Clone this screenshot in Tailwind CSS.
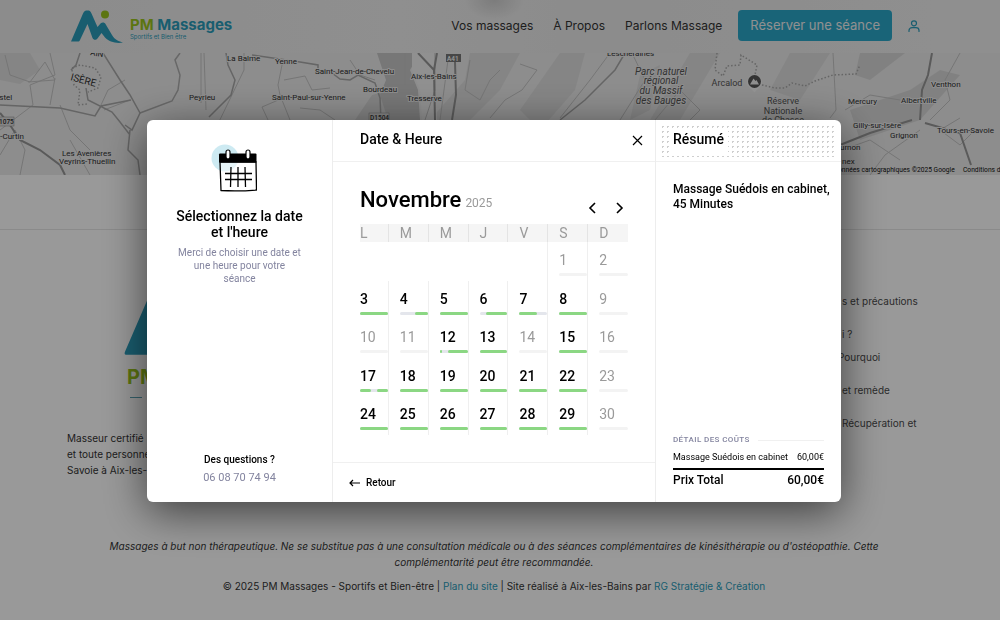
<!DOCTYPE html>
<html lang="fr">
<head>
<meta charset="utf-8">
<meta name="viewport" content="width=device-width, initial-scale=1">
<title>PM Massages - Réserver une séance</title>
<script src="https://cdn.jsdelivr.net/npm/@tailwindcss/browser@4"></script>
</head>
<body class="h-screen overflow-hidden bg-white font-['Inter',sans-serif] text-[#333]">
<div class="relative">
  <header class="flex h-[53px] items-center bg-[#eeeeee] bg-[radial-gradient(ellipse_30px_20px_at_494px_0px,#cfcfcf,transparent),linear-gradient(90deg,#e9e9e9,#eeeeee_40%,#e9e9e9_60%,#efefef)] pr-20 pb-0.5 pl-[70px]">
    <a href="#" class="flex items-center gap-1.5 pt-0.5" aria-label="PM Massages">
      <svg class="h-[34px] w-[54px]" viewBox="0 0 54 34" fill="none">
        <path d="M1 31.5 13 3.5C14 1 15.5.5 17.500.5S20.500 1 21.500 3.500L27.500 17 30.500 13.500C32 12 34.500 12 35.500 14L42 25C45 30 49 31.500 53 32.500 46 34 39 31.500 35 27.500L31.500 23 27.500 28.500C26 30.500 23.500 30 22.500 28L17.500 14 10 30C9.500 31.200 9 31.500 8 31.500Z" fill="#2b9cba"/>
        <circle cx="35" cy="4.500" r="4" fill="#9ac31c"/>
      </svg>
      <span class="block pt-1">
        <span class="block text-[15px] leading-[17px] font-bold text-[#2b9cba]"><span class="text-[#9ac31c]">PM</span> Massages</span>
        <span class="block text-[6px] leading-[8px] text-[#2b9cba]">Sportifs et Bien être</span>
      </span>
    </a>
    <nav class="ml-auto flex items-center gap-5 text-xs whitespace-nowrap">
      <a href="#">Vos massages</a>
      <a href="#">À Propos</a>
      <a href="#">Parlons Massage</a>
      <button type="button" class="-ml-1 h-[31px] rounded bg-[#2ba7c9] px-3 text-[13px] text-[#f0f0f0]">Réserver une séance</button>
      <a href="#" aria-label="Mon compte" class="-ml-1">
        <svg class="size-3" viewBox="0 0 12 12" fill="none" stroke="#2b9cba" stroke-width="1.200" stroke-linecap="round"><circle cx="6" cy="3.300" r="2.500"/><path d="M1 11.500V10.500C1 8.700 2.500 7.700 4 7.700H8C9.500 7.700 11 8.700 11 10.500V11.500"/></svg>
      </a>
    </nav>
  </header>

  <svg class="block h-[122px] w-full bg-[#ebebeb] font-['Roboto',sans-serif]" viewBox="0 53 1000 122" preserveAspectRatio="xMidYMid slice">
    <g fill="#dedede">
      <path d="M470 53H520L500 90 470 120H430L465 80ZM560 53 585 53 575 90 540 130 520 110ZM690 53H720L680 120H650ZM790 53 830 53 800 100 770 90ZM0 53H30L40 70 20 84 0 80ZM640 75 660 65 650 110 630 120Z"/>
      <path d="M860 53H905L870 80 855 75ZM355 120 372 95 390 90 385 120ZM850 110 910 90 940 70 960 75 920 120 860 140Z" fill="#d8d8d8"/>
    </g>
    <path d="M377 53H420L410 70 418 90 420 120H388L380 95 386 80Z" fill="#c6c6c6"/>
    <path d="M412 53 434 53 437 120H422L420 90 412 70Z" fill="#f0f0f0"/>
    <g fill="none" stroke="#c4c4c4" stroke-width="1">
      <path d="M5 55 10 75 30 82 45 62 55 80 28 82M50 53 55 75 30 85 33 105 0 130M55 78 50 105M125 80 108 90 101 105M130 100 104 110M201 53V103M204 53 206 110M244 53V70L215 130M282 65 278 85 280 95 290 120M284 80 305 76 312 90 330 88M290 95 262 107 268 120M0 155 15 130 25 150 20 175M60 105 70 130 90 150M350 60 360 75 375 80M470 60 465 90 480 100 490 80 500 70M520 64 537 70 522 90 505 100 490 118M610 53 590 80 560 118M632 53 645 80 620 120M655 120 680 90 700 110 690 120M833 53 836 110 830 118M960 53 945 80 950 100 930 120M845 110 870 95 900 100M842 150 870 140 900 160M960 118 940 130 960 145 975 130M870 175 885 155 920 130M405 53V85M300 108 320 110 335 120M435 53V90L425 120M448 60 440 120M70 140 90 175"/>
      <path d="M180 53 175 60 180 75 178 90 172 101 140 113" stroke="#adadad" stroke-width="1.500"/>
    </g>
    <g fill="none" stroke="#a8a8a8" stroke-width="1.500">
      <path d="M80 53 76 65 71 70M103 53 120 80 130 95 140 113 132 130 125 125M86 88 88 100 112 112 120 122 130 135M0 105 60 108 95 116 101 106 131 100M226 53 228 65 235 80 231 95 209 117M252 55 300 62 318 65 318 73M332 73 340 79 350 80 358 75 375 83 380 98 381 120M130 130 128 150 138 160 140 175M625 53 615 70 585 100 560 120"/>
      <path d="M418 53 434 70 435 120M437 53 434 70M455 62 456 95 452 120M932 53 928 75 922 90 920 120M840 145 870 133 912 120M925 123 960 133 971 165M0 113 10 125 20 140 40 150 60 165 65 175" stroke="#969696" stroke-width="2"/>
      <path d="M72 68 80 65 95 68 101 77 98 88 88 92M72 70 74 85 80 90 78 105 88 104M717 53 715 70 723 76 727 66 740 65 741 55 757 65 755 75M762 85 775 88 785 88 792 83 805 86 815 81 833 75 856 74 860 65" stroke-dasharray="1.500 2"/>
    </g>
    <g fill="#303030" stroke="#ececec" stroke-width="2" paint-order="stroke" stroke-linejoin="round" font-size="8">
      <text x="90" y="55" transform="rotate(10 90 55)">AIN</text>
      <text x="70" y="80" font-size="10" transform="rotate(15 70 80)">ISÈRE</text>
      <text x="-10" y="100">Pastel</text>
      <text x="-4" y="139">e-Curtin</text>
      <text x="189" y="100">Peyrieu</text>
      <text x="227" y="61">La Balme</text>
      <text x="275" y="64">Yenne</text>
      <text x="315" y="74">Saint-Jean-de-Chevelu</text>
      <text x="363" y="92">Bourdeau</text>
      <text x="272" y="100">Saint-Paul-sur-Yenne</text>
      <text x="411" y="79">Aix-les-Bains</text>
      <text x="407" y="101">Tresserve</text>
      <text x="607" y="56">Lescheraines</text>
      <text x="62" y="156">Les Avenières</text>
      <text x="59" y="164">Veyrins-Thuellin</text>
      <text x="848" y="104">Mercury</text>
      <text x="901" y="103">Albertville</text>
      <text x="931" y="87">Venthon</text>
      <text x="853" y="128">Gilly-sur-Isère</text>
      <text x="890" y="138">Grignon</text>
      <text x="937" y="133">Tours-en-Savoie</text>
      <text x="840" y="150">urnon</text>
      <text x="842" y="164">nex</text>
      <g fill="#555" font-size="9" text-anchor="middle">
        <g font-style="italic" font-size="10"><text x="661" y="75">Parc naturel</text><text x="661" y="84">régional</text><text x="661" y="94">du Massif</text><text x="661" y="104">des Bauges</text></g>
        <text x="783" y="104">Réserve</text><text x="783" y="114">Nationale</text><text x="783" y="123">de Chasse</text>
        <text x="727" y="86">Arcalod</text>
      </g>
    </g>
    <path d="M747 82A7.500 7.500 0 0 1 762 82C762 87 757 89 754.500 92.500 752 89 747 87 747 82Z" fill="#f5f5f5"/><circle cx="754.500" cy="81.500" r="6.500" fill="#555"/><path d="M750 84.500 753.500 78.500 755.500 81 756.500 80 759 84.500Z" fill="#eee"/>
    <rect x="446" y="54" width="15" height="8" fill="#777"/>
    <rect x="-4" y="117" width="18" height="9" fill="#ddd" stroke="#888" stroke-width=".5"/>
    <rect x="369" y="113" width="20" height="8" fill="#ddd" stroke="#888" stroke-width=".5"/>
    <g font-size="6.500" font-weight="500" fill="#333"><text x="447" y="60.500" fill="#fff">A41</text><text x="-1" y="124">1075</text><text x="370" y="119.500">D1504</text></g>
    <g font-size="6.700" fill="#111"><text x="838" y="172">onnées cartographiques ©2025 Google</text><text x="963" y="172">Conditions d'utilisation</text></g>
  </svg>

  <footer class="text-[10px]">
    <div class="h-[55px] border-b border-[#e6e6e6]"></div>
    <div class="flex h-[308px] justify-between pr-[68px] pl-[67px]">
      <div class="w-[90px] pt-[59px] whitespace-nowrap">
        <svg class="ml-[57px] h-[66px] w-[104px]" viewBox="0 0 54 34" fill="none">
          <path d="M1 34Q0 34 .5 32.500L13 3.500C14 1 15.500.5 17.500.5S20.500 1 21.500 3.500L40 34Z" fill="#2b9cba"/>
        </svg>
        <p class="mt-3 ml-[60px] text-xl leading-5 font-bold text-[#9ac31c]">PM</p>
        <div class="mt-2.5 ml-[63px] h-px w-3 bg-[#5aa3b5]"></div>
        <p class="mt-8 leading-4">Masseur certifié<br>et toute personne<br>Savoie à Aix-les-Bains</p>
      </div>
      <ul class="w-[90px] pt-[63px] leading-4 whitespace-nowrap text-[#4a4a4a]">
        <li><a href="#">s et précautions</a></li>
        <li class="mt-[17px]"><a href="#">i ?</a></li>
        <li class="mt-[7px] -ml-1"><a href="#">Pourquoi</a></li>
        <li class="mt-[17px]"><a href="#">et remède</a></li>
        <li class="mt-[17px]"><a href="#">Récupération et</a></li>
      </ul>
    </div>
    <div class="pr-3 text-center leading-4">
      <p class="mx-auto max-w-[820px] italic">Massages à but non thérapeutique. Ne se substitue pas à une consultation médicale ou à des séances complémentaires de kinésithérapie ou d'ostéopathie. Cette complémentarité peut être recommandée.</p>
      <p class="mt-2">© 2025 PM Massages - Sportifs et Bien-être | <a href="#" class="text-[#2b9cba]">Plan du site</a> | Site réalisé à Aix-les-Bains par <a href="#" class="text-[#2b9cba]">RG Stratégie &amp; Création</a></p>
    </div>
  </footer>
</div>

<div class="fixed inset-0 flex items-center justify-center bg-black/40 pt-0.5 pr-3 font-['Roboto',sans-serif] text-black">
  <div role="dialog" aria-modal="true" aria-label="Date et heure" class="grid min-h-[382px] w-full max-w-[694px] grid-cols-[185px_1fr_185px] overflow-hidden rounded-md bg-white shadow-[0_10px_44px_rgba(0,0,0,0.6)]">
    <section class="flex flex-col items-center px-6 pt-6 pb-4 text-center">
      <svg class="mr-3 h-12 w-[46px]" viewBox="0 0 46 48" fill="none">
        <circle cx="14" cy="14" r="13.500" fill="#cdeaf2"/>
        <path d="M9 18H45L45.500 46Q27 47.500 10 46.500Z" fill="#fff" fill-opacity=".5" stroke="#000" stroke-width="1.300"/>
        <path d="M8 10.500Q8 9.500 9 9.500H44.500Q45.500 9.500 45.500 10.500V18.500H8Z" fill="#000"/>
        <rect x="15" y="6" width="4" height="9" rx="2" fill="#fff" stroke="#000" stroke-width="1.200"/>
        <rect x="35" y="6" width="4" height="9" rx="2" fill="#fff" stroke="#000" stroke-width="1.200"/>
        <path d="M20 23 19.500 43M27 23V43M34 23 34.500 43M14 29.500H41M14 35.500H41" stroke="#000" stroke-width="1.300"/>
      </svg>
      <h2 class="mt-4 text-sm leading-4 font-medium">Sélectionnez la date<br>et l'heure</h2>
      <p class="mt-1.5 text-[10px] leading-[13px] text-[#83849f]">Merci de choisir une date et<br>une heure pour votre<br>séance</p>
      <p class="mt-auto text-[10px] leading-4 font-medium">Des questions ?</p>
      <a href="tel:0608707494" class="mt-0.5 text-[11px] leading-4 text-[#83849f]">06 08 70 74 94</a>
    </section>

    <section class="flex flex-col border-x border-[#ededed]">
      <div class="flex h-[42px] items-center justify-between border-b border-[#f0f0f0] pr-3 pl-[27px]">
        <h1 class="pb-1 text-sm font-medium">Date &amp; Heure</h1>
        <button type="button" aria-label="Fermer"><svg class="size-[11px]" viewBox="0 0 11 11" stroke="#000" stroke-width="1.200"><path d="M1 1 10 10M10 1 1 10"/></svg></button>
      </div>
      <div class="flex-1 px-[27px] pt-6">
        <div class="flex h-[38px] items-end justify-between pb-2.5">
          <h2 class="text-[22px] leading-7 font-medium">Novembre<span class="pl-1 text-xs font-normal text-[#9a9a9a]">2025</span></h2>
          <div class="flex gap-5 pr-1">
            <button type="button" aria-label="Mois précédent"><svg class="h-3 w-2" viewBox="0 0 8 12" fill="none" stroke="#000" stroke-width="1.600"><path d="M7 1 2 6 7 11"/></svg></button>
            <button type="button" aria-label="Mois suivant"><svg class="h-3 w-2" viewBox="0 0 8 12" fill="none" stroke="#000" stroke-width="1.600"><path d="M1 1 6 6 1 11"/></svg></button>
          </div>
        </div>
        <div class="grid h-[18px] grid-cols-7 gap-x-[11px] bg-[#f5f5f5] text-sm leading-[18px] text-[#9a9a9a]" id="weekdays"></div>
        <div class="grid h-[193px] grid-cols-7 grid-rows-5 gap-x-[11px]" id="days"></div>
      </div>
      <div class="flex h-10 items-center border-t border-[#f0f0f0] px-4">
        <button type="button" class="flex items-center gap-1.5 text-[10px] font-medium"><svg class="h-2 w-[11px]" viewBox="0 0 11 8" fill="none" stroke="#000" stroke-width="1.200"><path d="M11 4H1M4 1 1 4 4 7"/></svg>Retour</button>
      </div>
    </section>

    <section class="flex flex-col">
      <div class="flex h-[42px] items-stretch border-b border-[#f0f0f0] p-1">
        <div class="flex flex-1 items-center bg-[radial-gradient(circle,#cfcfcf_1px,transparent_1px)] bg-size-[5px_5px] pl-[13px]"><h2 class="-ml-1 bg-white px-1 pb-1 text-sm leading-5 font-medium">Résumé</h2></div>
      </div>
      <div class="flex flex-1 flex-col px-[17px] pt-5 pb-3.5">
        <p class="-mr-3 text-xs leading-[15px] font-medium">Massage Suédois en cabinet,<br>45 Minutes</p>
        <div class="mt-auto flex items-center gap-2 text-[8px] leading-3 font-medium tracking-wider text-[#83849f]">DÉTAIL DES COÛTS<span class="h-px flex-1 bg-[#f0f0f0]"></span></div>
        <div class="flex justify-between border-b-2 border-black pt-1 pb-1 text-[9px] leading-[14px]"><span>Massage Suédois en cabinet</span><span>60,00€</span></div>
        <div class="flex justify-between pt-0.5 text-xs leading-4 font-medium"><span>Prix Total</span><span>60,00€</span></div>
      </div>
    </section>
  </div>
</div>
<script>
  const weekdays = ['L', 'M', 'M', 'J', 'V', 'S', 'D'];
  document.getElementById('weekdays').innerHTML = weekdays
    .map((d, i) => `<span class="${i < 6 ? 'border-r border-[#e4e4e4]' : ''}">${d}</span>`).join('');

  // Free slots of each open day, as [start, end] percentages of the day.
  const full = [[0, 100]];
  const slots = { 3: full, 4: [[54, 100]], 5: full, 6: [[23, 100]], 7: [[0, 62]], 8: full,
    12: [[0, 8], [30, 100]], 13: full, 15: full, 17: [[0, 38], [62, 100]] };
  for (const d of [18, 19, 20, 21, 22, 24, 25, 26, 27, 28, 29]) slots[d] = full;

  let cells = '<span></span><span></span><span></span><span></span><span class="border-r border-[#efefef]"></span>';
  for (let d = 1; d <= 30; d++) {
    const open = slots[d];
    const line = (d + 4) % 7 < 6 ? 'border-r border-[#efefef]' : '';
    const bars = (open || []).map(([a, b]) =>
      `<span class="absolute inset-y-0 rounded-full bg-[#8bd783]" style="left:${a}%;width:${b - a}%"></span>`).join('');
    cells += `<button type="button" ${open ? '' : 'disabled'} class="flex flex-col pt-2 text-left text-sm leading-5 ${line} ${open ? 'font-medium text-black' : 'text-[#9a9a9a]'}">${d}<span class="relative mt-[3px] block h-[3px] w-full rounded-full ${open ? 'bg-[#e4e6ec]' : 'bg-[#f3f3f3]'}">${bars}</span></button>`;
  }
  document.getElementById('days').innerHTML = cells;
</script>
</body>
</html>
